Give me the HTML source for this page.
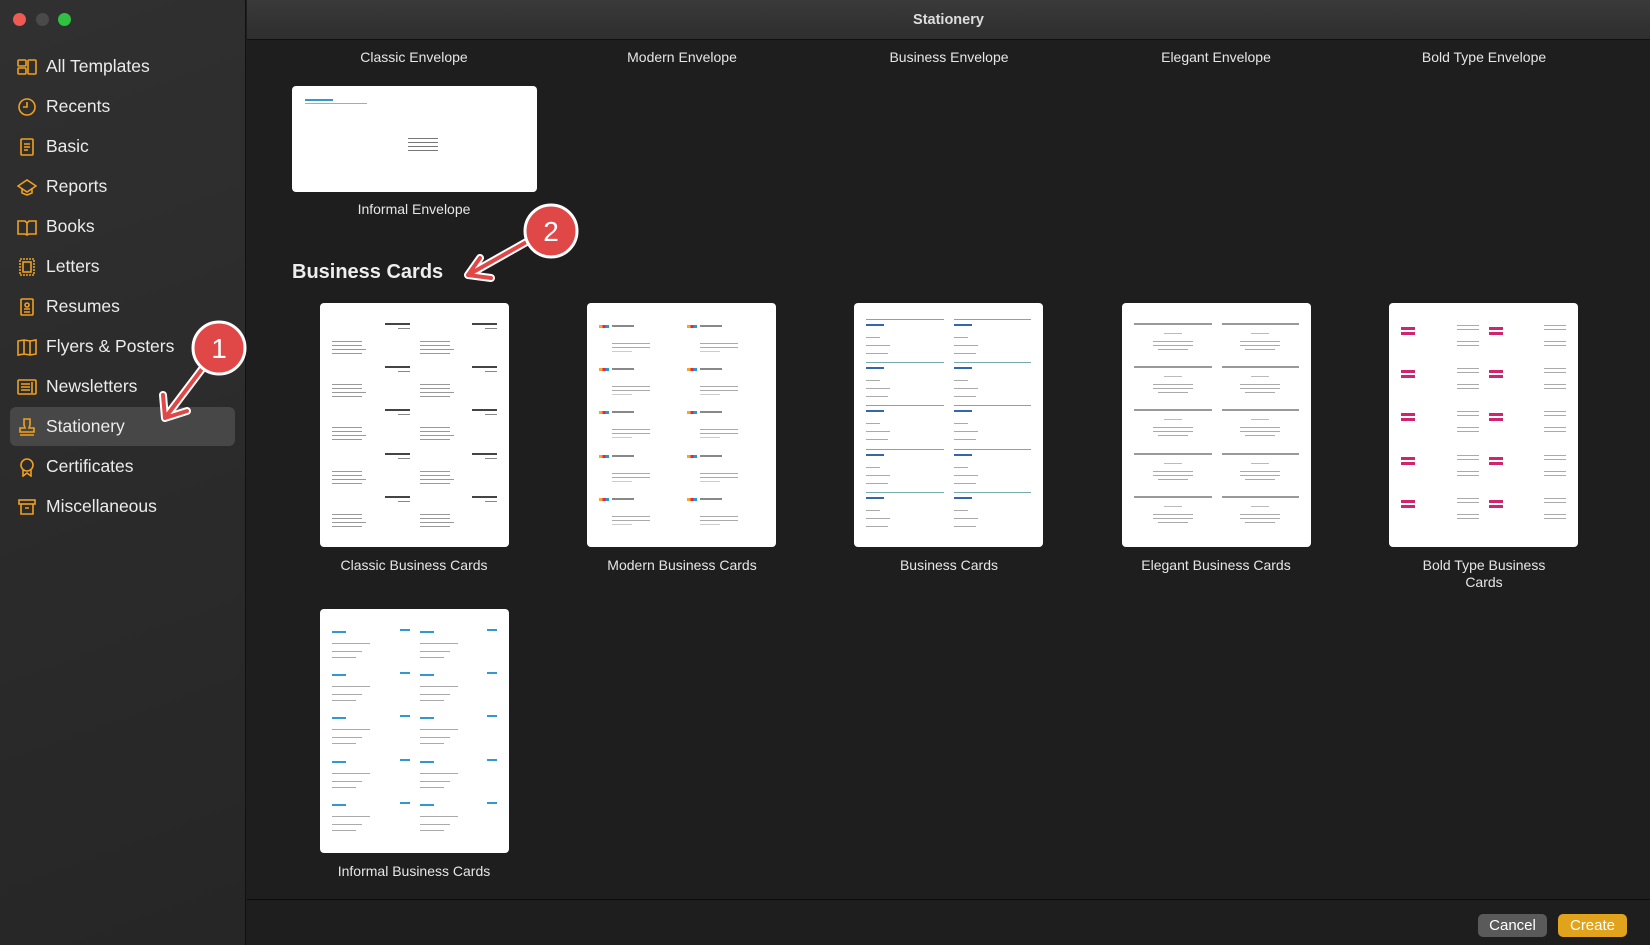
<!DOCTYPE html>
<html><head><meta charset="utf-8"><style>
*{box-sizing:border-box;margin:0;padding:0}
body{width:1650px;height:945px;background:#1e1e1e;font-family:"Liberation Sans",sans-serif;color:#e8e8e8;position:relative;overflow:hidden}
.side{position:absolute;left:0;top:0;width:246px;height:945px;background:linear-gradient(160deg,#303030,#262626);border-right:1px solid #111}
.dot{position:absolute;top:13px;width:13px;height:13px;border-radius:50%}
.item{position:absolute;left:10px;width:225px;height:39px;border-radius:6px;font-size:17.5px;line-height:39px;padding-left:36px;color:#ececec}
.item svg{position:absolute;left:7px;top:10px}
.sel{background:#474747}
.title{position:absolute;left:247px;top:0;right:0;height:40px;background:linear-gradient(#3a3a3a,#2e2e2e);border-bottom:1px solid #111;text-align:center;font-size:14.5px;font-weight:bold;line-height:40px;color:#ddd}
.lbl{position:absolute;font-size:14px;color:#e6e6e6;text-align:center;width:240px;line-height:17px}
.thumb{position:absolute;background:#fff;border-radius:4px;width:189px;height:244px;padding:16px 12px;display:grid;grid-template-columns:1fr 1fr;grid-template-rows:repeat(5,1fr);gap:4px 10px}
.c{background-repeat:no-repeat}
.t1 .c{background-image:linear-gradient(#444,#444),linear-gradient(#888,#888),linear-gradient(#999,#999),linear-gradient(#999,#999),linear-gradient(#999,#999),linear-gradient(#999,#999);background-size:25px 2px,12px 1px,30px 1px,30px 1px,34px 1px,30px 1px;background-position:right 4px,right 9px,0 22px,0 26px,0 30px,0 34px}
.t2 .c{background-image:linear-gradient(90deg,#f5a623 33%,#e24 33% 66%,#29d 66%),linear-gradient(#888,#888),linear-gradient(#aaa,#aaa),linear-gradient(#aaa,#aaa),linear-gradient(#ccc,#ccc);background-size:10px 3px,22px 2px,38px 1px,38px 1px,20px 1px;background-position:0 6px,13px 6px,13px 24px,13px 28px,13px 32px}
.t3 .c{background-image:linear-gradient(#7aa,#7aa),linear-gradient(#36a,#36a),linear-gradient(#aaa,#aaa),linear-gradient(#aaa,#aaa),linear-gradient(#aaa,#aaa);background-size:100% 1px,18px 2px,14px 1px,24px 1px,22px 1px;background-position:0 0,0 5px,0 18px,0 26px,0 34px}
.t4 .c{background-image:linear-gradient(#999,#999),linear-gradient(#bbb,#bbb),linear-gradient(#aaa,#aaa),linear-gradient(#aaa,#aaa),linear-gradient(#aaa,#aaa);background-size:100% 2px,18px 1px,40px 1px,40px 1px,30px 1px;background-position:0 4px,center 14px,center 22px,center 26px,center 30px}
.t5 .c{background-image:linear-gradient(#d2246d,#d2246d),linear-gradient(#d2246d,#d2246d),linear-gradient(#aaa,#aaa),linear-gradient(#aaa,#aaa),linear-gradient(#aaa,#aaa),linear-gradient(#aaa,#aaa);background-size:14px 3px,14px 3px,22px 1px,22px 1px,22px 1px,22px 1px;background-position:0 8px,0 13px,right 6px,right 10px,right 22px,right 26px}
.t6 .c{background-image:linear-gradient(#39c,#39c),linear-gradient(#39c,#39c),linear-gradient(#aaa,#aaa),linear-gradient(#aaa,#aaa),linear-gradient(#aaa,#aaa);background-size:14px 2px,10px 2px,38px 1px,30px 1px,24px 1px;background-position:0 6px,right 4px,0 18px,0 26px,0 32px}
.btn{position:absolute;top:914px;height:23px;border-radius:5px;font-size:15px;line-height:23px;text-align:center;color:#fff}
</style></head><body>
<div class="side">
<div class="dot" style="left:13px;background:#ee5a54"></div>
<div class="dot" style="left:36px;background:#4a4a4a"></div>
<div class="dot" style="left:58px;background:#2fc142"></div>
<div class="item" style="top:47px"><svg width="20" height="20" fill="none" stroke="#f0a020" stroke-width="1.6"><rect x="1" y="3" width="8" height="6" rx="1"/><rect x="1" y="11" width="8" height="6" rx="1"/><rect x="11" y="3" width="8" height="14" rx="1"/></svg>All Templates</div>
<div class="item" style="top:87px"><svg width="20" height="20" fill="none" stroke="#f0a020" stroke-width="1.6"><circle cx="10" cy="10" r="8"/><path d="M10 5v5H6"/></svg>Recents</div>
<div class="item" style="top:127px"><svg width="20" height="20" fill="none" stroke="#f0a020" stroke-width="1.6"><rect x="4" y="2" width="12" height="16" rx="1"/><path d="M7 7h6M7 10h6M7 13h4"/></svg>Basic</div>
<div class="item" style="top:167px"><svg width="20" height="20" fill="none" stroke="#f0a020" stroke-width="1.6"><path d="M1 9l9-6 9 6-9 6zM5 11v5l5 2 5-2v-5"/></svg>Reports</div>
<div class="item" style="top:207px"><svg width="20" height="20" fill="none" stroke="#f0a020" stroke-width="1.6"><path d="M1 4h7l2 2 2-2h7v13h-7l-2 1-2-1H1zM10 6v12"/></svg>Books</div>
<div class="item" style="top:247px"><svg width="20" height="20" fill="none" stroke="#f0a020" stroke-width="1.6" stroke-dasharray="2 1"><rect x="3" y="2" width="14" height="16"/><rect x="6" y="5" width="8" height="10" stroke-dasharray="none"/></svg>Letters</div>
<div class="item" style="top:287px"><svg width="20" height="20" fill="none" stroke="#f0a020" stroke-width="1.6"><rect x="4" y="2" width="12" height="16" rx="1"/><circle cx="10" cy="8" r="2"/><path d="M7 12h6M7 15h6"/></svg>Resumes</div>
<div class="item" style="top:327px"><svg width="20" height="20" fill="none" stroke="#f0a020" stroke-width="1.6"><path d="M1 4l6-1 6 1 6-1v14l-6 1-6-1-6 1zM7 3v14M13 4v14"/></svg>Flyers &amp; Posters</div>
<div class="item" style="top:367px"><svg width="20" height="20" fill="none" stroke="#f0a020" stroke-width="1.6"><rect x="1" y="3" width="18" height="14" rx="1"/><path d="M4 7h9M4 10h9M4 13h9M15 5v11"/></svg>Newsletters</div>
<div class="item sel" style="top:407px"><svg width="20" height="20" fill="none" stroke="#f0a020" stroke-width="1.6"><path d="M7 2h6v6l-1 3h5v4H3v-4h5L7 8zM3 18h14"/></svg>Stationery</div>
<div class="item" style="top:447px"><svg width="20" height="20" fill="none" stroke="#f0a020" stroke-width="1.6"><circle cx="10" cy="8" r="6"/><path d="M6 13v6l4-3 4 3v-6"/></svg>Certificates</div>
<div class="item" style="top:487px"><svg width="20" height="20" fill="none" stroke="#f0a020" stroke-width="1.6"><rect x="2" y="3" width="16" height="4"/><path d="M4 7v10h12V7M8 11h4"/></svg>Miscellaneous</div>
</div>
<div class="title">Stationery</div>
<div class="lbl" style="left:294px;top:49px">Classic Envelope</div>
<div class="lbl" style="left:562px;top:49px">Modern Envelope</div>
<div class="lbl" style="left:829px;top:49px">Business Envelope</div>
<div class="lbl" style="left:1096px;top:49px">Elegant Envelope</div>
<div class="lbl" style="left:1364px;top:49px">Bold Type Envelope</div>
<div style="position:absolute;left:292px;top:86px;width:245px;height:106px;background:#fff;border-radius:4px">
<div style="position:absolute;left:13px;top:13px;width:28px;height:2px;background:#39c"></div>
<div style="position:absolute;left:13px;top:17px;width:62px;height:1px;background:#aaa"></div>
<div style="position:absolute;left:116px;top:52px;width:30px;height:16px;background:repeating-linear-gradient(#777 0 1px,transparent 1px 4px)"></div>
</div>
<div class="lbl" style="left:294px;top:201px">Informal Envelope</div>
<div style="position:absolute;left:292px;top:261px;font-size:20px;font-weight:bold;color:#eee">Business Cards</div>
<div class="thumb t1" style="left:320px;top:303px"><i class="c"></i><i class="c"></i><i class="c"></i><i class="c"></i><i class="c"></i><i class="c"></i><i class="c"></i><i class="c"></i><i class="c"></i><i class="c"></i></div>
<div class="thumb t2" style="left:587px;top:303px"><i class="c"></i><i class="c"></i><i class="c"></i><i class="c"></i><i class="c"></i><i class="c"></i><i class="c"></i><i class="c"></i><i class="c"></i><i class="c"></i></div>
<div class="thumb t3" style="left:854px;top:303px"><i class="c"></i><i class="c"></i><i class="c"></i><i class="c"></i><i class="c"></i><i class="c"></i><i class="c"></i><i class="c"></i><i class="c"></i><i class="c"></i></div>
<div class="thumb t4" style="left:1122px;top:303px"><i class="c"></i><i class="c"></i><i class="c"></i><i class="c"></i><i class="c"></i><i class="c"></i><i class="c"></i><i class="c"></i><i class="c"></i><i class="c"></i></div>
<div class="thumb t5" style="left:1389px;top:303px"><i class="c"></i><i class="c"></i><i class="c"></i><i class="c"></i><i class="c"></i><i class="c"></i><i class="c"></i><i class="c"></i><i class="c"></i><i class="c"></i></div>
<div class="lbl" style="left:294px;top:557px">Classic Business Cards</div>
<div class="lbl" style="left:562px;top:557px">Modern Business Cards</div>
<div class="lbl" style="left:829px;top:557px">Business Cards</div>
<div class="lbl" style="left:1096px;top:557px">Elegant Business Cards</div>
<div class="lbl" style="left:1364px;top:557px">Bold Type Business<br>Cards</div>
<div class="thumb t6" style="left:320px;top:609px"><i class="c"></i><i class="c"></i><i class="c"></i><i class="c"></i><i class="c"></i><i class="c"></i><i class="c"></i><i class="c"></i><i class="c"></i><i class="c"></i></div>
<div class="lbl" style="left:294px;top:863px">Informal Business Cards</div>
<div style="position:absolute;left:247px;right:0;top:899px;height:1px;background:#0c0c0c"></div>
<div class="btn" style="left:1478px;width:69px;background:#5a5a5a">Cancel</div>
<div class="btn" style="left:1558px;width:69px;background:#e1a21c">Create</div>
<svg style="position:absolute;left:0;top:0" width="1650" height="945">
<g stroke="#fff" stroke-width="8" stroke-linecap="round" stroke-linejoin="round" fill="none"><path d="M205 365L165 418M163 395l2 23 22-7"/><path d="M530 240L468 275M480 258l-12 17 23 3"/></g>
<g stroke="#e04848" stroke-width="4" stroke-linecap="round" stroke-linejoin="round" fill="none"><path d="M205 365L165 418M163 395l2 23 22-7"/><path d="M530 240L468 275M480 258l-12 17 23 3"/></g>
<circle cx="219" cy="348" r="26" fill="#e04848" stroke="#fff" stroke-width="3"/>
<circle cx="551" cy="231" r="26" fill="#e04848" stroke="#fff" stroke-width="3"/>
<text x="219" y="358" fill="#fff" font-size="28" text-anchor="middle" font-family="Liberation Sans">1</text>
<text x="551" y="241" fill="#fff" font-size="28" text-anchor="middle" font-family="Liberation Sans">2</text>
</svg>
</body></html>
